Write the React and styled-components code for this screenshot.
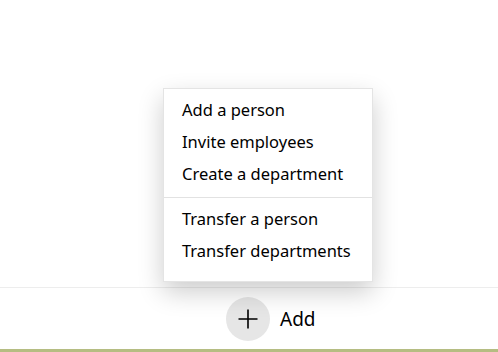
import React from 'react';
import styled, {createGlobalStyle} from 'styled-components';

const Global = createGlobalStyle`
    html, body {
        margin: 0;
        padding: 0;
        background: #ffffff;
    }
    body {
        font-family: "Noto Sans", "Open Sans", sans-serif;
        color: #000000;
    }
`;

const Page = styled.div`
    height: 100vh;
    display: flex;
    flex-direction: column;
`;

const Content = styled.div`
    flex: 1;
`;

const Bar = styled.div`
    height: 61px;
    border-top: 1px solid #ededed;
    border-bottom: 3px solid #b5bd82;
    display: flex;
    align-items: center;
    padding-left: 226px;
`;

const AddWrap = styled.div`
    position: relative;
    display: flex;
    align-items: center;
    gap: 10px;
    cursor: pointer;
`;

const Circle = styled.div`
    width: 44px;
    height: 44px;
    border-radius: 50%;
    background: #e6e6e6;
    display: flex;
    align-items: center;
    justify-content: center;
`;

const AddLabel = styled.span`
    font-size: 19px;
    line-height: 24px;
`;

const Menu = styled.div`
    position: absolute;
    left: -63px;
    bottom: calc(100% + 15px);
    width: 208px;
    background: #ffffff;
    border: 1px solid #e4e4e4;
    box-shadow: 0 10px 24px rgba(0, 0, 0, 0.2);
    padding: 5px 0 14px;
    cursor: default;
`;

const Item = styled.div`
    height: 32px;
    display: flex;
    align-items: center;
    padding-left: 18px;
    font-size: 16.5px;
    white-space: nowrap;
`;

const Divider = styled.div`
    height: 1px;
    background: #e2e2e2;
    margin: 7px 0 5px;
`;

const PlusIcon = () => (
    <svg width="22" height="22" viewBox="0 0 22 22">
        <path d="M11 1.5v19M1.5 11h19" stroke="#000" strokeWidth="1.6" fill="none" />
    </svg>
);

export default function App() {
    return (
        <Page>
            <Global />
            <Content />
            <Bar>
                <AddWrap>
                    <Menu>
                        <Item>Add a person</Item>
                        <Item>Invite employees</Item>
                        <Item>Create a department</Item>
                        <Divider />
                        <Item>Transfer a person</Item>
                        <Item>Transfer departments</Item>
                    </Menu>
                    <Circle><PlusIcon /></Circle>
                    <AddLabel>Add</AddLabel>
                </AddWrap>
            </Bar>
        </Page>
    );
}
